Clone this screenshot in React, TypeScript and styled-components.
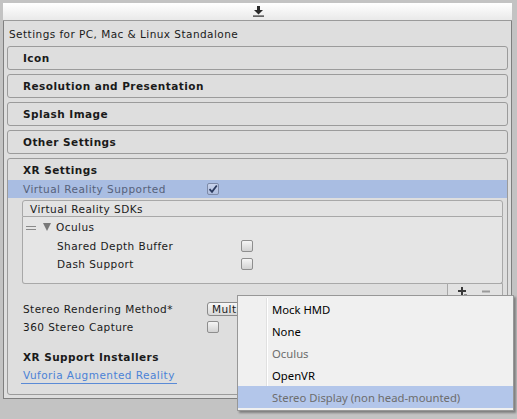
import React from "react";
import styled, { createGlobalStyle } from "styled-components";

const Global = createGlobalStyle`
  html, body { margin: 0; padding: 0; background: #c3c3c3; }
  body { width: 517px; height: 419px; overflow: hidden; font-family: "DejaVu Sans", Verdana, sans-serif; font-size: 10.5px; letter-spacing: 0.45px; color: #1a1a1a; }
  * { box-sizing: border-box; }
`;

const Screen = styled.div`
  position: relative;
  width: 517px;
  height: 419px;
  padding: 3px 5px 0 3px;
`;

const Panel = styled.div`
  height: 396px;
  border: 1px solid #7f7f7f;
  border-top: none;
  background: #dedede;
  display: flex;
  flex-direction: column;
`;

const Toolbar = styled.div`
  height: 18px;
  margin: 0 -1px;
  background: linear-gradient(#ffffff, #e9e9e9);
  border-bottom: 1px solid #9a9a9a;
  display: flex;
  justify-content: center;
  align-items: center;
  padding-left: 2px;
`;

const Title = styled.div`
  height: 25px;
  display: flex;
  align-items: center;
  padding-left: 5px;
`;

const Content = styled.div`
  display: flex;
  flex-direction: column;
  gap: 4px;
  padding: 0 3px;
`;

const Foldout = styled.div`
  height: 24px;
  border: 1px solid #9b9b9b;
  border-radius: 3px;
  display: flex;
  align-items: center;
  padding-left: 15px;
  font-weight: bold;
`;

const XRBox = styled.div`
  height: 237px;
  border: 1px solid #9b9b9b;
  border-radius: 3px;
  display: flex;
  flex-direction: column;
`;

const XRHeader = styled.div`
  height: 21px;
  display: flex;
  align-items: center;
  padding-left: 15px;
  font-weight: bold;
`;

const PropRow = styled.div<{ $h?: number; $hl?: boolean }>`
  height: ${(p) => p.$h ?? 18}px;
  display: flex;
  align-items: center;
  padding-left: 15px;
  background: ${(p) => (p.$hl ? "#a9bde2" : "transparent")};
  color: ${(p) => (p.$hl ? "#56617a" : "#1a1a1a")};
`;

const Label = styled.div<{ $w?: number }>`
  width: ${(p) => p.$w ?? 184}px;
  flex: none;
  white-space: nowrap;
`;

const Box = styled.div<{ $on?: boolean }>`
  width: 12px;
  height: 12px;
  border: 1px solid ${(p) => (p.$on ? "#7d8aa8" : "#8e8e8e")};
  border-radius: 2px;
  background: ${(p) =>
    p.$on ? "linear-gradient(#c8d3ec, #aebddd)" : "linear-gradient(#f5f5f5, #d2d2d2)"};
  display: flex;
  align-items: center;
  justify-content: center;
`;

const List = styled.div`
  margin: 2px 4px 0 14px;
  display: flex;
  flex-direction: column;
`;

const ListHeader = styled.div`
  height: 17px;
  border: 1px solid #a8a8a8;
  border-radius: 3px 3px 0 0;
  background: #e3e3e3;
  display: flex;
  align-items: center;
  padding-left: 7px;
`;

const ListBody = styled.div`
  height: 67px;
  border: 1px solid #a8a8a8;
  border-top: none;
  border-radius: 0 0 3px 3px;
  background: #e5e5e5;
  display: flex;
  flex-direction: column;
`;

const ElemRow = styled.div<{ $h: number }>`
  height: ${(p) => p.$h}px;
  display: flex;
  align-items: center;
  padding-left: 34px;
`;

const HeadRow = styled.div`
  height: 20px;
  display: flex;
  align-items: center;
  padding-left: 3px;
`;

const Handle = styled.div`
  width: 10px;
  height: 4px;
  border-top: 1px solid #8a8a8a;
  border-bottom: 1px solid #8a8a8a;
  margin: 2px 7px 0 0;
`;

const Tri = styled.div`
  width: 0;
  height: 0;
  border-left: 4.5px solid transparent;
  border-right: 4.5px solid transparent;
  border-top: 8px solid #797979;
  margin-right: 5px;
`;

const Footer = styled.div`
  align-self: flex-end;
  width: 56px;
  height: 17px;
  margin-top: -1px;
  border: 1px solid #a8a8a8;
  border-radius: 0 0 3px 3px;
  background: #e2e2e2;
  display: flex;
  align-items: center;
  padding-left: 10px;
  gap: 14px;
`;

const Dropdown = styled.div`
  width: 130px;
  height: 14px;
  border: 1px solid #8a8a8a;
  border-radius: 3px;
  background: linear-gradient(#f7f7f7, #d8d8d8);
  display: flex;
  align-items: center;
  padding-left: 4px;
`;

const SectionTitle = styled.div`
  height: 20px;
  margin-top: 11px;
  display: flex;
  align-items: center;
  padding-left: 15px;
  font-weight: bold;
`;

const LinkRow = styled.div`
  height: 19px;
  display: flex;
  align-items: center;
  padding-left: 13px;
`;

const Link = styled.span`
  color: #4b82d6;
  padding: 0 2px 1px;
  border-bottom: 1px solid #5a8ad6;
  line-height: 13px;
`;

const Menu = styled.div`
  position: absolute;
  left: 237px;
  top: 295px;
  width: 277px;
  height: 116px;
  background: #f0f0f0;
  border: 1px solid #979797;
  box-shadow: 2px 2px 2px rgba(0, 0, 0, 0.35);
  padding: 2px 0;
  font-family: "Noto Sans", "Open Sans", sans-serif;
  font-size: 11.3px;
  letter-spacing: 0;
  display: flex;
  flex-direction: column;
  &::before {
    content: "";
    position: absolute;
    left: 28px;
    top: 2px;
    bottom: 2px;
    width: 1px;
    background: #e0e0e0;
    box-shadow: 1px 0 0 #ffffff;
  }
`;

const MenuItem = styled.div<{ $dis?: boolean; $hl?: boolean }>`
  position: relative;
  height: 22px;
  display: flex;
  align-items: center;
  padding-left: 34px;
  color: ${(p) => (p.$dis ? "#6d6d6d" : "#000")};
  background: ${(p) => (p.$hl ? "#b3c6ea" : "transparent")};
`;

const Arrow = () => (
  <svg width="11" height="11" viewBox="0 0 11 11">
    <rect x="4" y="0" width="3" height="4" fill="#2a2a2a" />
    <path d="M1 4 H10 L5.5 8.5 Z" fill="#2a2a2a" />
    <rect x="0" y="9.5" width="11" height="1.2" fill="#2a2a2a" />
  </svg>
);

const Check = () => (
  <svg width="10" height="10" viewBox="0 0 10 10">
    <path d="M1.5 5.2 L4 7.8 L8.8 1.5" fill="none" stroke="#2b3a5e" strokeWidth="1.8" />
  </svg>
);

const Plus = () => (
  <svg width="10" height="9" viewBox="0 0 10 9">
    <rect x="3" y="0" width="2" height="8" fill="#3a3a3a" />
    <rect x="0" y="3" width="8" height="2" fill="#3a3a3a" />
    <rect x="6" y="7.5" width="3" height="1" fill="#3a3a3a" />
  </svg>
);

const Minus = () => (
  <svg width="9" height="9" viewBox="0 0 9 9">
    <rect x="0" y="3.5" width="8" height="2" fill="#9a9a9a" />
  </svg>
);

export default function App() {
  return (
    <Screen>
      <Global />
      <Panel>
        <Toolbar>
          <Arrow />
        </Toolbar>
        <Title>Settings for PC, Mac &amp; Linux Standalone</Title>
        <Content>
          <Foldout>Icon</Foldout>
          <Foldout>Resolution and Presentation</Foldout>
          <Foldout>Splash Image</Foldout>
          <Foldout>Other Settings</Foldout>
          <XRBox>
            <XRHeader>XR Settings</XRHeader>
            <PropRow $hl>
              <Label>Virtual Reality Supported</Label>
              <Box $on>
                <Check />
              </Box>
            </PropRow>
            <List>
              <ListHeader>Virtual Reality SDKs</ListHeader>
              <ListBody>
                <HeadRow>
                  <Handle />
                  <Tri />
                  Oculus
                </HeadRow>
                <ElemRow $h={18}>
                  <Label>Shared Depth Buffer</Label>
                  <Box />
                </ElemRow>
                <ElemRow $h={18}>
                  <Label>Dash Support</Label>
                  <Box />
                </ElemRow>
              </ListBody>
              <Footer>
                <Plus />
                <Minus />
              </Footer>
            </List>
            <PropRow>
              <Label>Stereo Rendering Method*</Label>
              <Dropdown>Multi Pass</Dropdown>
            </PropRow>
            <PropRow>
              <Label>360 Stereo Capture</Label>
              <Box />
            </PropRow>
            <SectionTitle>XR Support Installers</SectionTitle>
            <LinkRow>
              <Link>Vuforia Augmented Reality</Link>
            </LinkRow>
          </XRBox>
        </Content>
      </Panel>
      <Menu>
        <MenuItem>Mock HMD</MenuItem>
        <MenuItem>None</MenuItem>
        <MenuItem $dis>Oculus</MenuItem>
        <MenuItem>OpenVR</MenuItem>
        <MenuItem $dis $hl>Stereo Display (non head-mounted)</MenuItem>
      </Menu>
    </Screen>
  );
}
